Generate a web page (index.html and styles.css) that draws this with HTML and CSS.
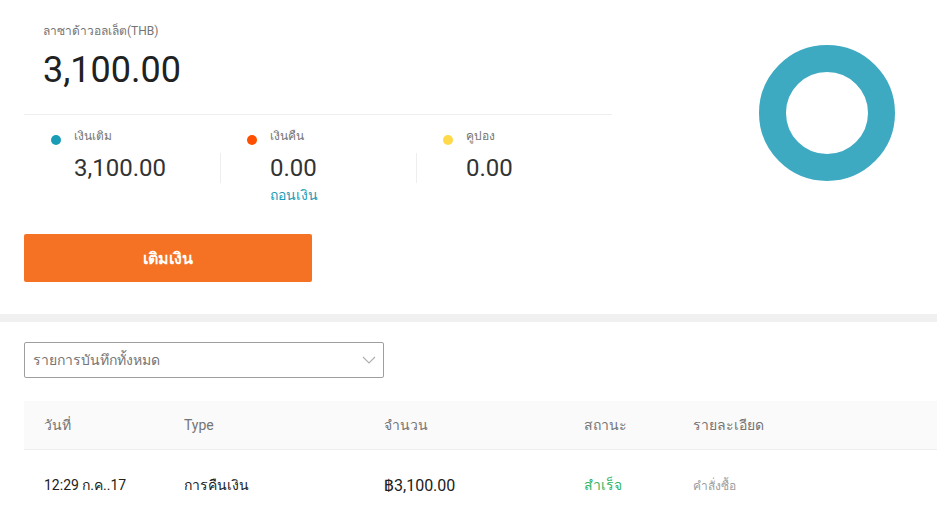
FILE: index.html
```html
<!DOCTYPE html>
<html lang="th">

<head>
    <meta charset="UTF-8">
    <meta name="viewport" content="width=device-width, initial-scale=1.0">
    <title>ลาซาด้าวอลเล็ต</title>
    <link rel="stylesheet" href="styles.css">
</head>

<body>
    <div class="summary">
        <div class="balance">
            <div class="balance-head">
                <div class="balance-label">ลาซาด้าวอลเล็ต(THB)</div>
                <div class="balance-amount">3,100.00</div>
            </div>

            <div class="stats">
                <div class="stat">
                    <div class="stat-label"><span class="dot dot-topup"></span>เงินเติม</div>
                    <div class="stat-value">3,100.00</div>
                </div>
                <div class="stat">
                    <div class="stat-label"><span class="dot dot-refund"></span>เงินคืน</div>
                    <div class="stat-value">0.00</div>
                    <a class="stat-link" href="#">ถอนเงิน</a>
                </div>
                <div class="stat">
                    <div class="stat-label"><span class="dot dot-coupon"></span>คูปอง</div>
                    <div class="stat-value">0.00</div>
                </div>
            </div>

            <button class="topup-btn">เติมเงิน</button>
        </div>

        <div class="chart">
            <svg width="140" height="140" viewBox="0 0 140 140">
                <circle cx="70" cy="70" r="54.5" fill="none" stroke="#3eaac2" stroke-width="27"></circle>
            </svg>
        </div>
    </div>

    <div class="band"></div>

    <div class="records">
        <div class="filter">
            <span>รายการบันทึกทั้งหมด</span>
            <svg width="14" height="8" viewBox="0 0 14 8">
                <path d="M1 1l6 6 6-6" fill="none" stroke="#b0b0b0" stroke-width="1.2"></path>
            </svg>
        </div>

        <table class="record-table">
            <thead>
                <tr>
                    <th class="col-date">วันที่</th>
                    <th class="col-type">Type</th>
                    <th class="col-amount">จำนวน</th>
                    <th class="col-status">สถานะ</th>
                    <th>รายละเอียด</th>
                </tr>
            </thead>
            <tbody>
                <tr>
                    <td>12:29 ก.ค..17</td>
                    <td>การคืนเงิน</td>
                    <td class="amount">฿3,100.00</td>
                    <td class="status-ok">สำเร็จ</td>
                    <td class="detail">คำสั่งซื้อ</td>
                </tr>
            </tbody>
        </table>
    </div>
</body>

</html>
```

FILE: styles.css
```css
body {
    margin: 0;
    font-family: Roboto, "Liberation Sans", Arial, sans-serif;
    background: white;
    color: #212121;
}

.summary {
    display: flex;
    height: 314px;
    padding: 0 24px;
}

.balance {
    width: 588px;
}

.balance-head {
    padding: 22px 0 0 19px;
    height: 92px;
    border-bottom: 1px solid #eeeeee;
}

.balance-label {
    font-size: 12px;
    line-height: 18px;
    color: #757575;
}

.balance-amount {
    font-size: 36px;
    line-height: 42px;
    margin-top: 9px;
    color: #212121;
}

.stats {
    display: flex;
    height: 119px;
}

.stat {
    width: 196px;
}

.stat-label {
    display: flex;
    align-items: center;
    padding: 11px 0 0 27px;
    font-size: 12px;
    line-height: 18px;
    color: #757575;
}

.dot {
    width: 10px;
    height: 10px;
    border-radius: 50%;
    margin: 9px 13px 0 0;
}

.dot-topup {
    background: #1a9cb7;
}

.dot-refund {
    background: #fe5000;
}

.dot-coupon {
    background: #ffd94a;
}

.stat-value {
    margin-top: 8px;
    padding-left: 50px;
    font-size: 24px;
    line-height: 30px;
    color: #333333;
}

.stat + .stat .stat-value {
    border-left: 1px solid #eeeeee;
    padding-left: 49px;
}

.stat-link {
    display: block;
    margin-top: 2px;
    padding-left: 50px;
    font-size: 14px;
    line-height: 20px;
    color: #1a9cb7;
    text-decoration: none;
}

.topup-btn {
    display: block;
    width: 288px;
    height: 48px;
    border: none;
    border-radius: 2px;
    background: #f57224;
    color: white;
    font-family: inherit;
    font-size: 16px;
    font-weight: bold;
    cursor: pointer;
}

.chart {
    flex: 1;
    display: flex;
    justify-content: flex-end;
    padding: 43px 16px 0 0;
}

.band {
    height: 8px;
    background: #f0f0f0;
}

.records {
    padding: 20px 0 0 24px;
}

.filter {
    box-sizing: border-box;
    width: 360px;
    height: 36px;
    display: flex;
    align-items: center;
    justify-content: space-between;
    padding: 0 7px 0 8px;
    border: 1px solid #9e9e9e;
    border-radius: 2px;
    font-size: 14px;
    color: #757575;
}

.record-table {
    width: 100%;
    margin-top: 23px;
    border-collapse: collapse;
    font-size: 14px;
}

.record-table th {
    height: 48px;
    padding: 0 0 0 20px;
    background: #fafafa;
    border-bottom: 1px solid #eeeeee;
    text-align: left;
    font-weight: normal;
    color: #757575;
}

.record-table td {
    height: 70px;
    padding: 0 0 0 20px;
    color: #212121;
}

.col-date {
    width: 120px;
}

.col-type {
    width: 180px;
}

.col-amount {
    width: 180px;
}

.col-status {
    width: 89px;
}

.record-table .amount {
    font-size: 16px;
}

.record-table .status-ok {
    color: #30b566;
}

.record-table .detail {
    font-size: 12px;
    color: #9e9e9e;
}
```
